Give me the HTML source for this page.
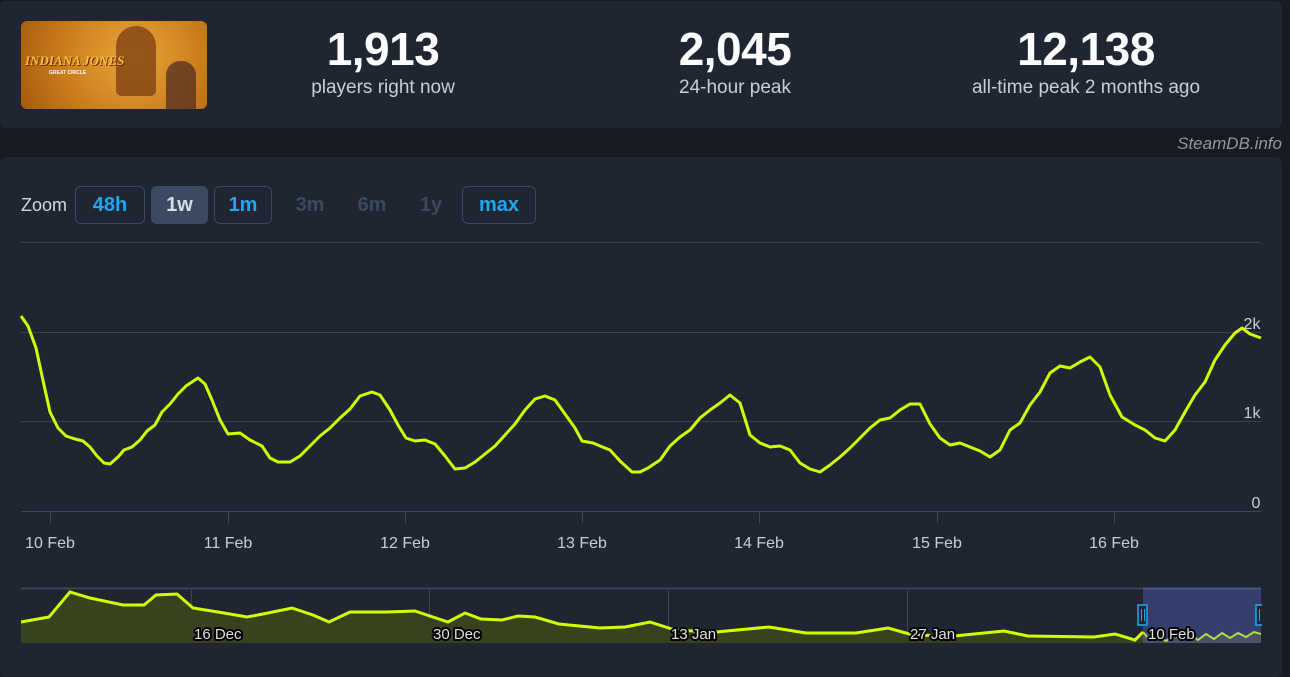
<!DOCTYPE html>
<html><head><meta charset="utf-8"><style>
*{margin:0;padding:0;box-sizing:border-box}
body{width:1290px;height:651px;background:#171a21;font-family:"Liberation Sans",sans-serif;overflow:hidden;position:relative;color:#fff}
.top{position:absolute;left:0;top:1px;width:1282px;height:127px;background:#1f2531;border-radius:6px}
.img{position:absolute;left:21px;top:21px;width:186px;height:88px;border-radius:6px;background:radial-gradient(circle at 60% 40%,#e9a53a,#c77a1a 60%,#a55a10);overflow:hidden}
.stat{position:absolute;top:22px;text-align:center;width:300px}
.stat b{display:block;font-size:46px;font-weight:bold;line-height:54px;letter-spacing:-0.5px}
.stat span{display:block;font-size:19px;color:#c9ced6;line-height:24px}
.wm{position:absolute;right:8px;top:134px;font-size:17px;font-style:italic;color:#8f98a3}
.chart{position:absolute;left:0;top:157px;width:1282px;height:520px;background:#1f2531;border-radius:6px}
.zoom{position:absolute;left:21px;top:186px;height:38px;display:flex;align-items:center;font-size:18px}
.zoom .l{color:#d5d9de;margin-right:8px}
.b{height:38px;border-radius:6px;display:flex;align-items:center;justify-content:center;font-weight:bold;font-size:20px;margin-right:6px}
.o{border:1px solid #3a4a5e;color:#1fa8f0}
.a{background:#3b4a60;color:#d8dde3}
.d{color:#3a4a5e}
</style></head><body>
<div class="top"></div>
<div class="img">
<div style="position:absolute;left:95px;top:5px;width:40px;height:70px;background:#7a3c12;border-radius:20px 20px 6px 6px;opacity:.75"></div>
<div style="position:absolute;left:145px;top:40px;width:30px;height:48px;background:#5a3322;border-radius:14px 14px 0 0;opacity:.8"></div>
<div style="position:absolute;left:4px;top:32px;font:italic bold 13px 'Liberation Serif',serif;color:#f5c43a;text-shadow:1px 1px 0 #6a1a05">INDIANA JONES</div>
<div style="position:absolute;left:28px;top:49px;font:bold 5px 'Liberation Sans',sans-serif;color:#fff">GREAT CIRCLE</div>
</div>
<div class="stat" style="left:233px"><b>1,913</b><span>players right now</span></div>
<div class="stat" style="left:585px"><b>2,045</b><span>24-hour peak</span></div>
<div class="stat" style="left:936px"><b>12,138</b><span>all-time peak 2 months ago</span></div>
<div class="wm">SteamDB.info</div>
<div class="chart"></div>
<div class="zoom"><span class="l">Zoom</span>
<div class="b o" style="width:70px">48h</div>
<div class="b a" style="width:57px">1w</div>
<div class="b o" style="width:58px;margin-right:10px">1m</div>
<div class="b d" style="width:56px">3m</div>
<div class="b d" style="width:56px">6m</div>
<div class="b d" style="width:50px">1y</div>
<div class="b o" style="width:74px">max</div>
</div>
<svg width="1290" height="651" style="position:absolute;left:0;top:0">
<g stroke="#3a414d" stroke-width="1">
<line x1="21" y1="242.5" x2="1261" y2="242.5"/><line x1="21" y1="332.5" x2="1261" y2="332.5"/><line x1="21" y1="421.5" x2="1261" y2="421.5"/>
</g>
<line x1="21" y1="511.5" x2="1261" y2="511.5" stroke="#3a4a5e"/>
<g stroke="#3a4a5e"><line x1="50.5" y1="512" x2="50.5" y2="523"/><line x1="228.5" y1="512" x2="228.5" y2="523"/><line x1="405.5" y1="512" x2="405.5" y2="523"/><line x1="582.5" y1="512" x2="582.5" y2="523"/><line x1="759.5" y1="512" x2="759.5" y2="523"/><line x1="937.5" y1="512" x2="937.5" y2="523"/><line x1="1114.5" y1="512" x2="1114.5" y2="523"/></g>
<g font-family="Liberation Sans" font-size="16" fill="#c9ced6" text-anchor="middle">
<text x="50" y="548">10 Feb</text><text x="228" y="548">11 Feb</text><text x="405" y="548">12 Feb</text><text x="582" y="548">13 Feb</text><text x="759" y="548">14 Feb</text><text x="937" y="548">15 Feb</text><text x="1114" y="548">16 Feb</text>
<text x="1252" y="329">2k</text><text x="1252" y="418">1k</text><text x="1256" y="508">0</text>
</g>
<polyline fill="none" stroke="#d2ff00" stroke-width="3" stroke-linejoin="round" points="21,316 28,326 36,348 44,385 50,412 58,428 66,436 75,439 83,441 90,447 97,456 104,463 110,464 118,457 124,450 132,447 140,440 147,431 155,425 162,412 170,404 178,394 186,386 198,378 205,384 212,400 220,420 228,434 240,433 250,440 262,446 270,458 278,462 290,462 300,456 310,446 320,436 330,428 340,418 350,409 360,396 372,392 380,395 390,410 398,425 406,438 415,441 425,440 435,444 445,456 455,469 465,468 475,462 485,454 495,446 505,435 515,424 525,410 535,399 545,396 555,400 565,414 575,428 582,441 593,443 600,446 610,450 620,461 632,472 640,472 648,468 660,460 670,446 680,437 690,430 700,418 710,410 720,403 730,395 740,403 750,435 760,443 770,447 780,446 790,450 800,463 810,469 820,472 830,465 840,457 850,448 860,438 870,428 880,420 890,418 900,410 910,404 920,404 930,424 940,438 950,445 960,443 970,447 980,451 990,457 1000,450 1010,430 1020,423 1030,405 1040,392 1050,373 1060,366 1070,368 1080,362 1090,357 1100,367 1110,395 1122,417 1135,425 1145,430 1155,438 1165,441 1175,430 1185,412 1195,395 1205,382 1215,360 1225,345 1235,333 1242,328 1250,334 1261,338"/>
<rect x="21" y="588" width="1240" height="55" fill="#1f2531"/>
<line x1="21" y1="588.5" x2="1261" y2="588.5" stroke="#3a4556" stroke-width="2"/>
<g stroke="#3a4556"><line x1="191.5" y1="589" x2="191.5" y2="643"/><line x1="429.5" y1="589" x2="429.5" y2="643"/><line x1="668.5" y1="589" x2="668.5" y2="643"/><line x1="907.5" y1="589" x2="907.5" y2="643"/></g>
<polygon fill="#39421f" points="21,643 21,622 49,617 70,592 90,598 123,605 144,605 156,595 177,594 193,608 218,612 247,617 263,614 292,608 313,615 329,622 350,612 387,612 415,611 448,622 465,613 481,619 502,620 518,616 535,617 559,624 600,628 625,627 650,622 675,630 716,632 769,627 806,633 856,633 888,628 913,635 954,636 1004,631 1028,636 1094,637 1115,634 1135,640 1143,632 1143,643"/>
<rect x="1143" y="588" width="118" height="55" fill="#353f6e"/>
<line x1="1143" y1="588.5" x2="1261" y2="588.5" stroke="#4a5580" stroke-width="2"/>
<polygon fill="#4a5368" points="1143,643 1143,632 1150,640 1158,636 1166,641 1174,635 1182,640 1190,634 1198,640 1206,634 1214,639 1222,633 1230,638 1238,633 1246,637 1254,632 1261,634 1261,643"/>
<polyline fill="none" stroke="#d2ff00" stroke-width="3" points="21,622 49,617 70,592 90,598 123,605 144,605 156,595 177,594 193,608 218,612 247,617 263,614 292,608 313,615 329,622 350,612 387,612 415,611 448,622 465,613 481,619 502,620 518,616 535,617 559,624 600,628 625,627 650,622 675,630 716,632 769,627 806,633 856,633 888,628 913,635 954,636 1004,631 1028,636 1094,637 1115,634 1135,640 1143,632"/>
<polyline fill="none" stroke="#b8d84a" stroke-width="2" points="1143,632 1150,640 1158,636 1166,641 1174,635 1182,640 1190,634 1198,640 1206,634 1214,639 1222,633 1230,638 1238,633 1246,637 1254,632 1261,634"/>
<g stroke="#1fa8f0" stroke-width="1.5" fill="#1f2531"><rect x="1138" y="605" width="9" height="20"/><rect x="1256" y="605" width="9" height="20"/></g>
<g stroke="#1fa8f0"><line x1="1141.5" y1="609" x2="1141.5" y2="621"/><line x1="1144.5" y1="609" x2="1144.5" y2="621"/><line x1="1259.5" y1="609" x2="1259.5" y2="621"/></g>
<rect x="1262" y="600" width="10" height="30" fill="#1f2531"/>
<g font-family="Liberation Sans" font-size="15" fill="#e0e0e0" stroke="#000" stroke-width="4" paint-order="stroke" stroke-linejoin="round" text-anchor="start">
<text x="194" y="639">16 Dec</text><text x="433" y="639">30 Dec</text><text x="671" y="639">13 Jan</text><text x="910" y="639">27 Jan</text><text x="1148" y="639">10 Feb</text>
</g>
</svg>
</body></html>
